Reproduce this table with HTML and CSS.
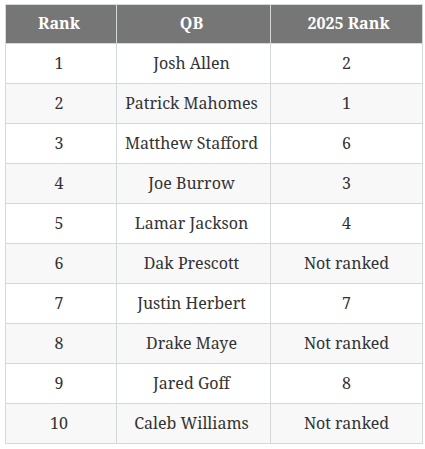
FILE: index.html
```html
<!DOCTYPE html>
<html>
<head>
<meta charset="utf-8">
<link rel="stylesheet" href="styles.css">
</head>
<body>
<table class="qb-table">
  <colgroup>
    <col class="c1"><col class="c2"><col class="c3">
  </colgroup>
  <thead>
    <tr><th>Rank</th><th>QB</th><th>2025 Rank</th></tr>
  </thead>
  <tbody>
    <tr><td>1</td><td>Josh Allen</td><td>2</td></tr>
    <tr><td>2</td><td>Patrick Mahomes</td><td>1</td></tr>
    <tr><td>3</td><td>Matthew Stafford</td><td>6</td></tr>
    <tr><td>4</td><td>Joe Burrow</td><td>3</td></tr>
    <tr><td>5</td><td>Lamar Jackson</td><td>4</td></tr>
    <tr><td>6</td><td>Dak Prescott</td><td>Not ranked</td></tr>
    <tr><td>7</td><td>Justin Herbert</td><td>7</td></tr>
    <tr><td>8</td><td>Drake Maye</td><td>Not ranked</td></tr>
    <tr><td>9</td><td>Jared Goff</td><td>8</td></tr>
    <tr><td>10</td><td>Caleb Williams</td><td>Not ranked</td></tr>
  </tbody>
</table>
</body>
</html>
```
FILE: styles.css
```css
html, body {
  margin: 0;
  padding: 0;
  background: #ffffff;
}
body {
  padding: 4px 0 0 5px;
  font-family: "Noto Serif", "DejaVu Serif", serif;
}
.qb-table {
  border-collapse: collapse;
  table-layout: fixed;
  width: 417px;
  font-size: 16px;
  line-height: 20px;
  color: #333333;
}
.c1 { width: 111px; }
.c2 { width: 154px; }
.c3 { width: 152px; }
.qb-table th,
.qb-table td {
  border: 1px solid #d3d8d8;
  text-align: center;
  padding: 0 0 2px;
  white-space: nowrap;
}
.qb-table th:nth-child(1),
.qb-table th:nth-child(2),
.qb-table td:nth-child(1),
.qb-table td:nth-child(2) {
  padding-right: 4px;
}
.qb-table th:nth-child(3) {
  padding-left: 4px;
}
.qb-table th {
  background: #767676;
  color: #ffffff;
  font-weight: bold;
  height: 36px;
}
.qb-table td {
  height: 37px;
}
.qb-table tbody tr:nth-child(even) td {
  background: #f8f8f8;
}
```
